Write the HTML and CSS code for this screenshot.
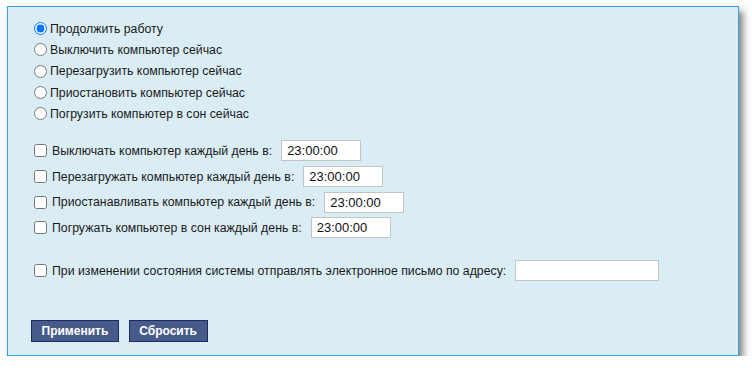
FILE: index.html
```html
<!DOCTYPE html>
<html lang="ru">
<head>
<meta charset="utf-8">
<link rel="stylesheet" href="styles.css">
</head>
<body>
<form class="panel">
  <div class="radios">
    <label class="rrow"><input type="radio" name="act" checked><span>Продолжить работу</span></label>
    <label class="rrow"><input type="radio" name="act"><span>Выключить компьютер сейчас</span></label>
    <label class="rrow"><input type="radio" name="act"><span>Перезагрузить компьютер сейчас</span></label>
    <label class="rrow"><input type="radio" name="act"><span>Приостановить компьютер сейчас</span></label>
    <label class="rrow"><input type="radio" name="act"><span>Погрузить компьютер в сон сейчас</span></label>
  </div>
  <div class="checks">
    <div class="crow"><input type="checkbox"><span class="clabel">Выключать компьютер каждый день в:</span><input class="time" type="text" value="23:00:00"></div>
    <div class="crow"><input type="checkbox"><span class="clabel">Перезагружать компьютер каждый день в:</span><input class="time" type="text" value="23:00:00"></div>
    <div class="crow"><input type="checkbox"><span class="clabel">Приостанавливать компьютер каждый день в:</span><input class="time" type="text" value="23:00:00"></div>
    <div class="crow"><input type="checkbox"><span class="clabel">Погружать компьютер в сон каждый день в:</span><input class="time" type="text" value="23:00:00"></div>
  </div>
  <div class="crow mail"><input type="checkbox"><span class="clabel">При изменении состояния системы отправлять электронное письмо по адресу:</span><input class="email" type="text" value=""></div>
  <div class="buttons">
    <button type="button" class="btn">Применить</button>
    <button type="button" class="btn">Сбросить</button>
  </div>
</form>
</body>
</html>
```
FILE: styles.css
```css
html, body {
  margin: 0;
  padding: 0;
  background: #ffffff;
}
body {
  font-family: "Liberation Sans", Arial, sans-serif;
  font-size: 12.3px;
  color: #1a1a1a;
}
.panel {
  box-sizing: border-box;
  margin: 6px 0 0 7px;
  width: 732px;
  height: 350px;
  background: #daedf5;
  border: 1px solid #34a3d6;
  box-shadow: 4px 5px 7px rgba(0, 0, 0, 0.5);
  padding: 11px 0 0 23px;
  display: flex;
  flex-direction: column;
}
.radios {
  display: flex;
  flex-direction: column;
}
.rrow {
  height: 21.3px;
  display: flex;
  align-items: center;
}
.rrow input {
  width: 13px;
  height: 13px;
  margin: 0 3px 0 3px;
}
.checks {
  margin-top: 16px;
  display: flex;
  flex-direction: column;
  gap: 4.6px;
}
.crow {
  height: 21px;
  display: flex;
  align-items: center;
}
.crow input[type="checkbox"] {
  width: 13px;
  height: 13px;
  margin: 0 5px 0 3px;
}
.clabel {
  margin-right: 9px;
}
.time, .email {
  box-sizing: border-box;
  height: 21px;
  border: 1px solid #c4c4c4;
  background: #ffffff;
  font-family: "Liberation Sans", Arial, sans-serif;
  font-size: 13px;
  color: #111;
  padding: 0 5px;
  margin: 0;
}
.time {
  width: 80px;
}
.email {
  width: 144px;
}
.mail {
  margin-top: 22px;
}
.buttons {
  margin-top: 39px;
  display: flex;
  gap: 10px;
}
.btn {
  box-sizing: border-box;
  height: 22px;
  background: #475b8a;
  border: 1px solid #1c2a6a;
  color: #ffffff;
  font-family: "Liberation Sans", Arial, sans-serif;
  font-weight: bold;
  font-size: 12px;
  padding: 0 9.5px;
}
```
